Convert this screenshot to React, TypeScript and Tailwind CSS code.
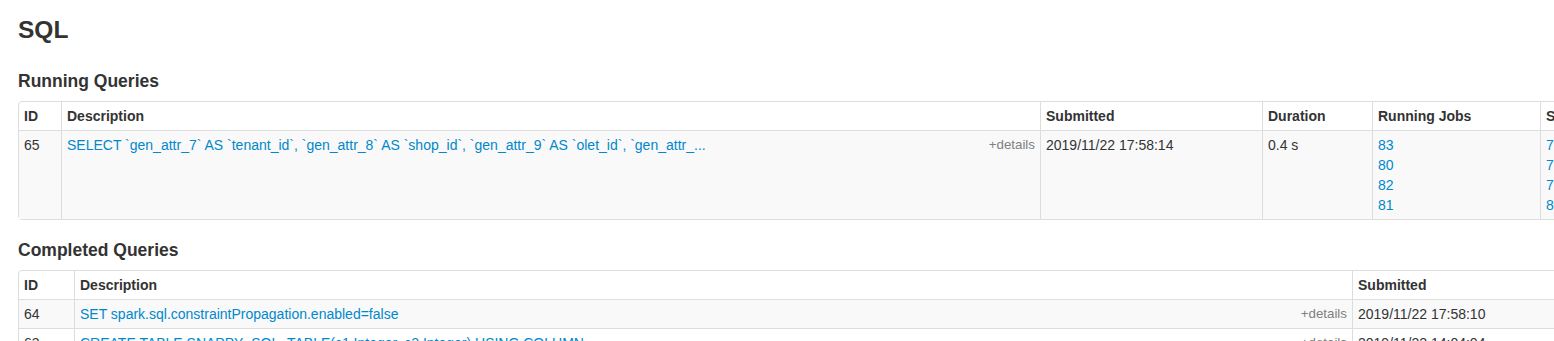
import React from "react"

type Cell = React.ReactNode

const LINK = "text-[#0088cc]"

function Details() {
  return <span className="float-right text-[13.33px] text-[#808080]">+details</span>
}

function QueryTable({ cols, headers, rows }: { cols: string; headers: string[]; rows: Cell[][] }) {
  return (
    <div className={`grid w-max rounded-[4px] border border-[#dddddd] ${cols}`}>
      {headers.map((h, i) => (
        <div key={h} className={`px-[5px] py-[4px] font-bold ${i > 0 ? "border-l border-[#dddddd]" : ""}`}>
          {h}
        </div>
      ))}
      {rows.map((row, r) =>
        row.map((cell, i) => (
          <div
            key={`${r}-${i}`}
            className={`border-t border-[#dddddd] px-[5px] py-[4px] ${i > 0 ? "border-l" : ""} ${
              r % 2 === 0 ? "bg-[#f9f9f9]" : "bg-white"
            }`}
          >
            {cell}
          </div>
        ))
      )}
    </div>
  )
}

export default function App() {
  const running: Cell[][] = [
    [
      "65",
      <div>
        <Details />
        <a className={LINK}>
          SELECT `gen_attr_7` AS `tenant_id`, `gen_attr_8` AS `shop_id`, `gen_attr_9` AS `olet_id`, `gen_attr_...
        </a>
      </div>,
      "2019/11/22 17:58:14",
      "0.4 s",
      <div className="flex flex-col">
        {["83", "80", "82", "81"].map((j) => (
          <a key={j} className={LINK}>
            {j}
          </a>
        ))}
      </div>,
      <div className="flex flex-col">
        {["79", "78", "77", "84"].map((j) => (
          <a key={j} className={LINK}>
            {j}
          </a>
        ))}
      </div>,
      "",
    ],
  ]

  const completed: Cell[][] = [
    [
      "64",
      <div>
        <Details />
        <a className={LINK}>SET spark.sql.constraintPropagation.enabled=false</a>
      </div>,
      "2019/11/22 17:58:10",
      "0.1 s",
    ],
    [
      "63",
      <div>
        <Details />
        <a className={LINK}>CREATE TABLE SNAPPY_SQL_TABLE(c1 Integer, c2 Integer) USING COLUMN</a>
      </div>,
      "2019/11/22 14:04:04",
      "0.3 s",
    ],
  ]

  return (
    <div className="h-[341px] w-full overflow-hidden bg-white font-['Liberation_Sans',Arial,sans-serif] text-[14px] leading-[20px] text-[#333333]">
      <div className="pl-[18px]">
        <h3 className="mt-[10px] text-[24.5px] font-bold leading-[40px]">SQL</h3>

        <h4 className="mb-[10px] mt-[21px] text-[17.5px] font-bold leading-[20px]">Running Queries</h4>
        <QueryTable
          cols="grid-cols-[42px_979px_222px_110px_168px_160px_160px]"
          headers={["ID", "Description", "Submitted", "Duration", "Running Jobs", "Succeeded Jobs", "Failed Jobs"]}
          rows={running}
        />

        <h4 className="mb-[10px] mt-[20px] text-[17.5px] font-bold leading-[20px]">Completed Queries</h4>
        <QueryTable
          cols="grid-cols-[55px_1278px_250px_110px]"
          headers={["ID", "Description", "Submitted", "Duration"]}
          rows={completed}
        />
      </div>
    </div>
  )
}
